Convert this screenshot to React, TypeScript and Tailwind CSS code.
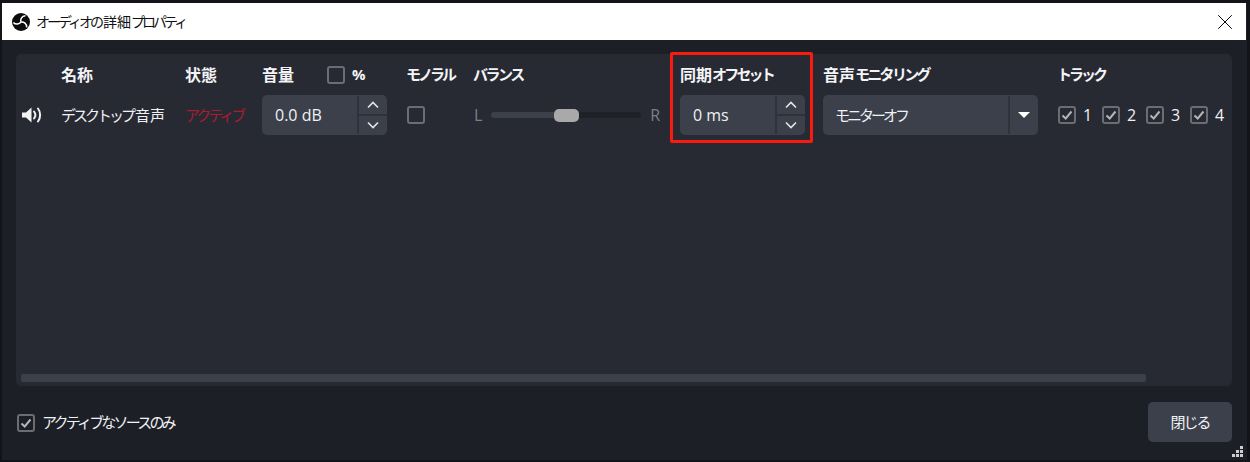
import React from 'react';
import { X } from 'lucide-react';

const font = { fontFamily: '"Open Sans", "Noto Sans CJK JP", sans-serif' };

const ObsLogo: React.FC = () => (
    <svg viewBox="0 0 18 18" className="h-[18px] w-[18px]">
        <circle cx="9" cy="9" r="9" fill="#0c0c0c" />
        <path d="M9 9C8 6.5 9.5 3 13.5 2.8" fill="none" stroke="#fff" strokeWidth="1.5" />
        <path d="M9 9C11.8 8.6 15 10.6 14.6 14.4" fill="none" stroke="#fff" strokeWidth="1.5" />
        <path d="M9 9C7.4 11.2 3.6 12 1.4 9.4" fill="none" stroke="#fff" strokeWidth="1.5" />
    </svg>
);

const SpeakerIcon: React.FC = () => (
    <svg viewBox="0 0 21 18" className="h-[18px] w-[21px]">
        <path d="M0 6.5h4L9.5 1.5v15L4 11.5H0Z" fill="#f2f2f2" />
        <path d="M12 5.5c1.6 2 1.6 5 0 7" fill="none" stroke="#f2f2f2" strokeWidth="2" strokeLinecap="round" />
        <path d="M16 2.5c2.8 3.5 2.8 9.5 0 13" fill="none" stroke="#f2f2f2" strokeWidth="2" strokeLinecap="round" />
    </svg>
);

const CheckBox: React.FC<{ checked?: boolean }> = ({ checked }) => (
    <span className="flex h-[18px] w-[18px] shrink-0 items-center justify-center rounded-[3px] border-2 border-[#6b6d74] bg-transparent">
        {checked && (
            <svg viewBox="0 0 14 14" className="h-[14px] w-[14px]">
                <path d="M2.5 7.5 5.7 10.5 11.5 3.5" fill="none" stroke="#b4b5b8" strokeWidth="2" />
            </svg>
        )}
    </span>
);

const Chevron: React.FC<{ up?: boolean }> = ({ up }) => (
    <svg viewBox="0 0 12 8" className="h-[8px] w-[12px]">
        <path d={up ? 'M1 6.5 6 1.5 11 6.5' : 'M1 1.5 6 6.5 11 1.5'} fill="none" stroke="#e4e5e8" strokeWidth="1.6" />
    </svg>
);

const SpinBox: React.FC<{ value: string }> = ({ value }) => (
    <div className="flex h-10 w-[125px] rounded-[5px] bg-[#3c404b]">
        <div className="flex flex-1 items-center pl-[13px] text-[16px] text-[#f0f1f4]">{value}</div>
        <div className="my-[1px] flex w-[30px] flex-col border-l-2 border-[#2f323b]">
            <div className="flex flex-1 items-center justify-center border-b-2 border-[#2f323b]">
                <Chevron up />
            </div>
            <div className="flex flex-1 items-center justify-center">
                <Chevron />
            </div>
        </div>
    </div>
);

// katakana in the reference runs narrower than its kanji
const Kana: React.FC<{ children: React.ReactNode }> = ({ children }) => (
    <span className="text-[15px] tracking-[-3px]">{children}</span>
);

const Kanji: React.FC<{ children: React.ReactNode }> = ({ children }) => (
    <span className="text-[16px]">{children}</span>
);

const Head: React.FC<{ children: React.ReactNode }> = ({ children }) => (
    <div className="flex h-[41px] items-center font-bold text-[#f4f4f6]">{children}</div>
);

const Cell: React.FC<{ children: React.ReactNode }> = ({ children }) => (
    <div className="flex h-10 items-center text-[#f0f1f4]">{children}</div>
);

const AudioTable: React.FC = () => (
    <div className="flex pl-[6px]">
        <div className="w-[39px]">
            <Head>{' '}</Head>
            <Cell><SpeakerIcon /></Cell>
        </div>
        <div className="w-[124px]">
            <Head><Kanji>名称</Kanji></Head>
            <Cell><Kana>デスクトップ</Kana><span className="ml-[2px] text-[15px]">音声</span></Cell>
        </div>
        <div className="w-[77px]">
            <Head><Kanji>状態</Kanji></Head>
            <Cell><span className="text-[#a81c34]"><Kana>アクティブ</Kana></span></Cell>
        </div>
        <div className="w-[144px]">
            <Head>
                <span className="w-[65px]"><Kanji>音量</Kanji></span>
                <CheckBox />
                <span className="ml-[7px] text-[15px]">%</span>
            </Head>
            <SpinBox value="0.0 dB" />
        </div>
        <div className="w-[67px]">
            <Head><Kana>モノラル</Kana></Head>
            <Cell><span className="ml-[1px]"><CheckBox /></span></Cell>
        </div>
        <div className="w-[207px]">
            <Head><span className="text-[15px] tracking-[-2.5px]">バランス</span></Head>
            <Cell>
                <div className="flex w-[187px] items-center gap-[9px] pl-[1px] text-[16px] text-[#7d8089]">
                    <span>L</span>
                    <div className="flex h-[6px] flex-1 items-center rounded-full bg-[#1f2128]">
                        <div className="h-[6px] w-[63px] rounded-l-full bg-[#3c404b]" />
                        <div className="h-[13px] w-[25px] rounded-[5px] bg-[#a9a9a9]" />
                    </div>
                    <span>R</span>
                </div>
            </Cell>
        </div>
        <div className="w-[143px]">
            <Head><Kanji>同期</Kanji><span className="text-[15px] tracking-[-2.8px]">オフセット</span></Head>
            <SpinBox value="0 ms" />
        </div>
        <div className="w-[234px]">
            <Head><Kanji>音声</Kanji><span className="text-[15px] tracking-[-2.7px]">モニタリング</span></Head>
            <div className="flex h-10 w-[215px] rounded-[5px] bg-[#3c404b] text-[#f0f1f4]">
                <div className="flex flex-1 items-center pl-[12px]"><Kana>モニターオフ</Kana></div>
                <div className="my-[1px] flex w-[30px] items-center justify-center border-l-2 border-[#2f323b]">
                    <span className="h-0 w-0 border-x-[6px] border-t-[6px] border-x-transparent border-t-white" />
                </div>
            </div>
        </div>
        <div>
            <Head><Kana>トラック</Kana></Head>
            <Cell>
                <div className="flex items-center gap-[9px] pl-[1px] text-[16px]">
                    {['1', '2', '3', '4'].map((n) => (
                        <div key={n} className="flex items-center gap-[7px]">
                            <CheckBox checked />
                            <span className="w-[10px]">{n}</span>
                        </div>
                    ))}
                </div>
            </Cell>
        </div>
    </div>
);

const App: React.FC = () => {
    return (
        <div className="relative h-[462px] w-[1250px] overflow-hidden bg-[#131419] pb-[2px] pl-[2px] pr-[3px] pt-[3px]" style={font}>
            <div className="flex h-full flex-col bg-[#1d1f27]">
                <div className="mr-[1px] flex h-[37px] items-center justify-between bg-white pl-[10px] pr-[8px] text-[#111]">
                    <div className="flex items-center gap-[6px]">
                        <ObsLogo />
                        <span className="flex items-center">
                            <span className="text-[14px] tracking-[-3px]">オーディオの</span>
                            <span className="ml-[2px] text-[14px]">詳細</span>
                            <span className="text-[14px] tracking-[-3px]">プロパティ</span>
                        </span>
                    </div>
                    <X className="h-[26px] w-[26px] text-black" strokeWidth={0.9} />
                </div>
                <div className="flex flex-1 flex-col px-[14px] pt-[14px]">
                    <div className="mr-[1px] flex h-[332px] flex-col rounded-[5px] bg-[#272a33]">
                        <AudioTable />
                        <div className="mt-auto px-[5px] pb-[4px]">
                            <div className="h-[8px] w-[1125px] rounded-[2px] bg-[#3c404b]" />
                        </div>
                    </div>
                    <div className="mr-[1px] flex flex-1 items-center justify-between pb-[2px]">
                        <label className="mt-[1px] flex items-center gap-[7px] pl-[1px] text-[#f0f1f4]">
                            <CheckBox checked />
                            <span className="text-[15px] tracking-[-2.8px]">アクティブなソースのみ</span>
                        </label>
                        <button className="h-10 w-[84px] rounded-[5px] bg-[#3c404b] text-[15px] tracking-[-2px] text-[#f0f1f4]">閉じる</button>
                    </div>
                </div>
            </div>
            {/* red annotation box */}
            <div className="absolute left-[670px] top-[52px] h-[91px] w-[143px] rounded-[2px] border-[3px] border-[#fb1a10]" />
            {/* size grip */}
            <svg viewBox="0 0 11 11" className="absolute left-[1232px] top-[446px] h-[11px] w-[11px]">
                <path d="M8 0h3v3H8ZM4 4h3v3H4ZM8 4h3v3H8ZM0 8h3v3H0ZM4 8h3v3H4ZM8 8h3v3H8Z" fill="#cfcfcf" />
            </svg>
        </div>
    );
};

export default App;
